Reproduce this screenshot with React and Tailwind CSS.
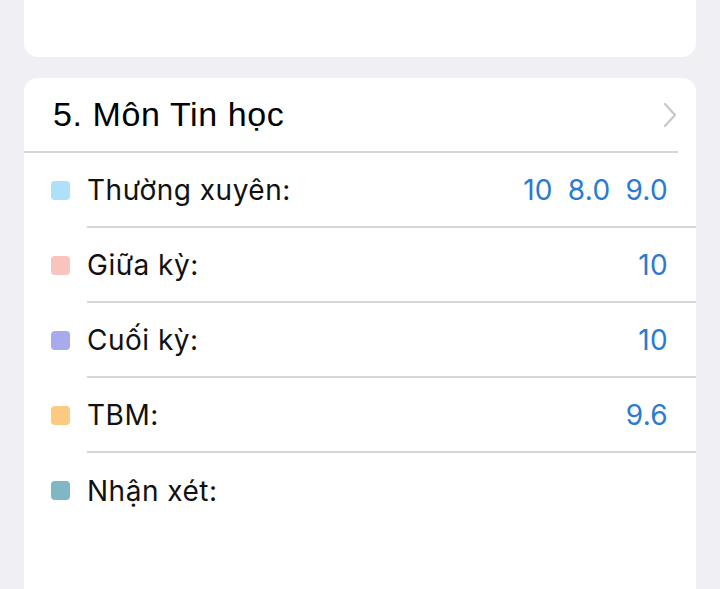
import React from 'react';

const rows = [
  { label: 'Thường xuyên:', color: 'bg-[#aee0f8]', values: ['10', '8.0', '9.0'] },
  { label: 'Giữa kỳ:', color: 'bg-[#f8c4bd]', values: ['10'] },
  { label: 'Cuối kỳ:', color: 'bg-[#a9a9ee]', values: ['10'] },
  { label: 'TBM:', color: 'bg-[#fcca80]', values: ['9.6'] },
  { label: 'Nhận xét:', color: 'bg-[#7fb8c4]', values: [] },
];

const App = () => {
  return (
    <div className="w-[720px] h-[589px] overflow-hidden bg-[#efeff4] px-6">
      {/* previous card tail */}
      <div className="h-[57px] bg-white rounded-b-[14px]" />

      {/* subject card */}
      <div className="mt-[21px] bg-white rounded-t-[14px] h-[600px]">
        <div className="flex items-center justify-between h-[73px] pl-[29px] pr-[18px]">
          <h2 className="text-[34px] text-black font-['Liberation_Sans',Arial,sans-serif] tracking-[0.6px]">
            5. Môn Tin học
          </h2>
          <svg width="16" height="26" viewBox="0 0 16 26" fill="none">
            <path d="M3 2l10 11L3 24" stroke="#c8c8cb" strokeWidth="2.2" strokeLinecap="round" strokeLinejoin="round" />
          </svg>
        </div>
        <div className="h-[2px] bg-[#d6d6d8] mr-[18px]" />

        <div className="font-['Inter','Open_Sans',sans-serif]">
          {rows.map((row, i) => (
            <div key={row.label} className="flex">
              <div className="w-[63px] flex items-center justify-end pr-[17px] h-[75px]">
                <div className={`w-[19px] h-[19px] rounded-[4px] ${row.color}`} />
              </div>
              <div className={`flex-1 flex items-center justify-between h-[75px] pr-[28px] ${i < rows.length - 1 ? 'border-b-2 border-[#d6d6d8]' : ''}`}>
                <span className="text-[28px] tracking-[0.5px] text-[#111]">{row.label}</span>
                <div className="flex gap-[15px] text-[28px] tracking-[0.3px] text-[#2a7bd0]">
                  {row.values.map((v, j) => (
                    <span key={j}>{v}</span>
                  ))}
                </div>
              </div>
            </div>
          ))}
        </div>
      </div>
    </div>
  );
};

export default App;
